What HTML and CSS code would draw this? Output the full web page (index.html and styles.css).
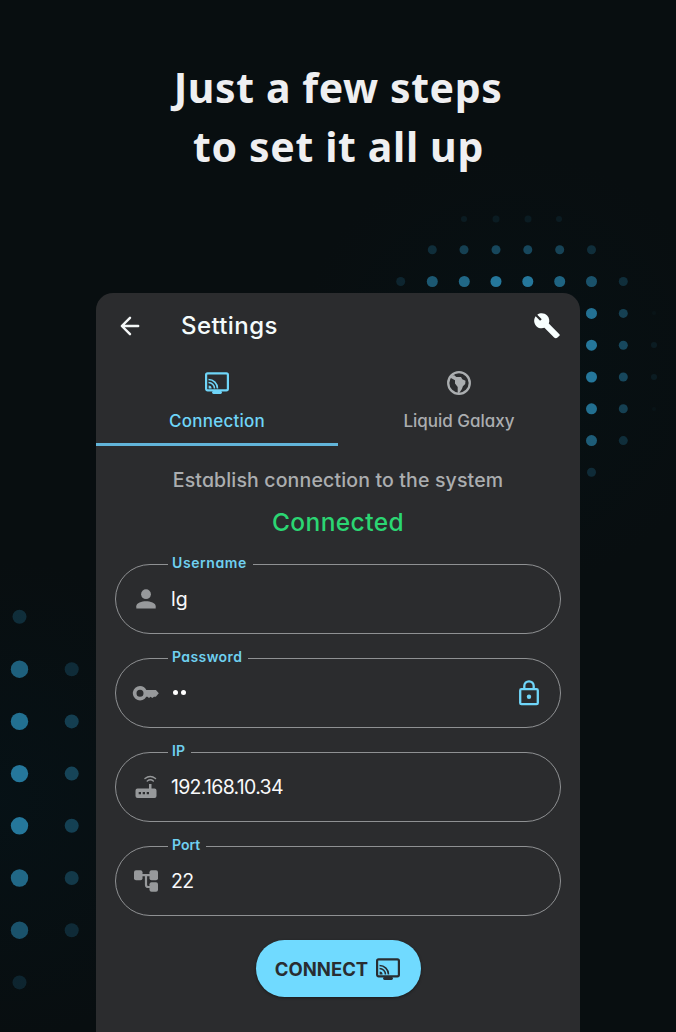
FILE: index.html
```html
<!DOCTYPE html>
<html lang="en">
<head>
<meta charset="utf-8">
<title>Settings</title>
<link rel="stylesheet" href="styles.css">
</head>
<body>
<main class="page">
  <svg class="dots" viewBox="0 0 676 1032" aria-hidden="true">
    <g fill="#25779b">
      <g opacity=".12"><circle cx="464" cy="219" r="3"/><circle cx="496" cy="219" r="3.5"/><circle cx="528" cy="219" r="3.5"/><circle cx="559" cy="219" r="3"/><circle cx="654" cy="345" r="3"/><circle cx="654" cy="377" r="3"/><circle cx="654" cy="313" r="2" opacity=".4"/><circle cx="654" cy="409" r="2" opacity=".4"/></g>
      <circle cx="432.300" cy="249.700" r="4.500" opacity=".3"/><circle cx="464" cy="249.700" r="4.500" opacity=".48"/><circle cx="496" cy="249.700" r="4.500" opacity=".55"/><circle cx="527.800" cy="249.700" r="4.500" opacity=".55"/><circle cx="559.700" cy="249.700" r="4.500" opacity=".5"/><circle cx="591.500" cy="249.700" r="4.500" opacity=".3"/>
      <circle cx="400.700" cy="281.500" r="4.500" opacity=".22"/><circle cx="432.300" cy="281.500" r="5.500" opacity=".7"/><circle cx="464.300" cy="281.500" r="5.500" opacity=".86"/><circle cx="496" cy="281.500" r="5.500"/><circle cx="527.800" cy="281.500" r="5.500"/><circle cx="559.700" cy="281.500" r="5.500" opacity=".82"/><circle cx="591.500" cy="281.500" r="5.500" opacity=".65"/><circle cx="623.300" cy="281.500" r="4.500" opacity=".3"/>
      <circle cx="591.500" cy="313.400" r="5.500" opacity=".95"/><circle cx="591.500" cy="345.200" r="5.500"/><circle cx="591.500" cy="377" r="5.500"/><circle cx="591.500" cy="408.800" r="5.500" opacity=".92"/><circle cx="591.500" cy="440.600" r="5.500" opacity=".75"/><circle cx="591.500" cy="472.300" r="4.500" opacity=".28"/>
      <circle cx="623.300" cy="313.400" r="4.500" opacity=".48"/><circle cx="623.300" cy="345.200" r="4.500" opacity=".55"/><circle cx="623.300" cy="377" r="4.500" opacity=".55"/><circle cx="623.300" cy="408.800" r="4.500" opacity=".48"/><circle cx="623.300" cy="440.600" r="4.500" opacity=".3"/>
      <circle cx="19.500" cy="616.800" r="7" opacity=".3"/><circle cx="19.500" cy="669.200" r="8.700" opacity=".78"/><circle cx="19.500" cy="721.400" r="8.700" opacity=".93"/><circle cx="19.500" cy="773.600" r="8.700"/><circle cx="19.500" cy="825.800" r="8.700"/><circle cx="19.500" cy="878" r="8.700" opacity=".86"/><circle cx="19.500" cy="930.200" r="8.700" opacity=".65"/><circle cx="19.500" cy="982.400" r="7" opacity=".22"/>
      <circle cx="71.700" cy="669.200" r="7" opacity=".28"/><circle cx="71.700" cy="721.400" r="7" opacity=".45"/><circle cx="71.700" cy="773.600" r="7" opacity=".5"/><circle cx="71.700" cy="825.800" r="7" opacity=".47"/><circle cx="71.700" cy="878" r="7" opacity=".4"/><circle cx="71.700" cy="930.200" r="7" opacity=".27"/>
    </g>
  </svg>

  <h1 class="headline"><span class="headline-a">Just a few steps</span><br><span class="headline-b">to set it all up</span></h1>

  <section class="card">
    <header class="bar">
      <svg class="icon-back" viewBox="0 0 24 24"><path d="M19 12H5.500M12 5l-7 7 7 7"/></svg>
      <h2 class="title">Settings</h2>
      <svg class="icon-tool" viewBox="0 0 24 24"><path d="M22.610 18.990l-9.080-9.080c.930-2.340.450-5.100-1.440-7C9.790.610 6.210.400 3.660 2.260L7.500 6.110 6.080 7.520 2.250 3.690C.390 6.230.600 9.820 2.900 12.110c1.860 1.860 4.570 2.350 6.890 1.480l8.300 8.300c.800.800 2.100.800 2.900 0l1.620-1.480c.500-.500.500-.900 0-1.420z"/></svg>
    </header>

    <nav class="tabs">
      <div class="tab tab-active">
        <svg class="icon-tab" viewBox="0 0 26 26"><use href="#cast"/></svg>
        <span class="label-connection">Connection</span>
      </div>
      <div class="tab">
        <svg class="icon-tab" viewBox="0 0 26 26"><circle cx="13" cy="13" r="10.800" fill="none" stroke="currentColor" stroke-width="2.300"/><path fill="currentColor" d="M5 5.500L8.300 5.300l2 1.800H15l1.300 2.200 3.200 1.500-.3 3.200-2.300 2.300-1 2.700-2.600 4h-1.600v-6L9 13.500V10.300L4 7.500z"/></svg>
        <span class="label-galaxy">Liquid Galaxy</span>
      </div>
    </nav>

    <p class="hint">Establish connection to the system</p>
    <p class="status">Connected</p>

    <form class="form">
      <fieldset class="field">
        <legend class="legend-user">Username</legend>
        <div class="row">
          <svg class="icon" viewBox="0 0 28 28"><circle cx="14" cy="9.200" r="4.900"/><path d="M4.300 23.500v-2.200c0-3.500 5.400-5 9.700-5s9.700 1.500 9.700 5v2.200z"/></svg>
          <span class="value value-user">lg</span>
        </div>
      </fieldset>
      <fieldset class="field">
        <legend class="legend-pass">Password</legend>
        <div class="row">
          <svg class="icon" viewBox="0 0 28 28"><path fill-rule="evenodd" d="M8 7a7.200 7.200 0 1 0 6.300 10.700h1.200l1.500 1.300 1.600-1.300 1.700 1.300 1.700-1.300h1.800l3-3.500-2.900-3.200H14.300A7.200 7.200 0 0 0 8 7zm0 3.700a3.500 3.500 0 1 1 0 7 3.500 3.500 0 0 1 0-7z"/></svg>
          <span class="value value-pass"><i></i><i></i></span>
          <svg class="icon-lock" viewBox="0 0 20 26"><rect x="1.200" y="9.200" width="17.600" height="15" rx="1.300"/><path d="M5.300 9V6a4.700 4.700 0 0 1 9.400 0v3"/><circle cx="10" cy="16.700" r="2.200"/></svg>
        </div>
      </fieldset>
      <fieldset class="field">
        <legend class="legend-ip">IP</legend>
        <div class="row">
          <svg class="icon" viewBox="0 0 28 28"><path fill-rule="evenodd" d="M5.500 15.500H17V11h2.500v4.500h3a2 2 0 0 1 2 2V23a2 2 0 0 1-2 2h-17a2 2 0 0 1-2-2v-5.500a2 2 0 0 1 2-2zm1.200 3.400V21.300H9v-2.400zm4 0V21.300H13v-2.400zm4 0V21.300H17v-2.400z"/><path class="stroke" d="M15.300 8q3-2.400 6 0M13 5.500q5.200-4.100 10.500 0"/></svg>
          <span class="value value-ip">192.168.10.34</span>
        </div>
      </fieldset>
      <fieldset class="field">
        <legend class="legend-port">Port</legend>
        <div class="row">
          <svg class="icon" viewBox="0 0 28 28"><rect x="2" y="3.200" width="8.500" height="10" rx="2"/><rect x="17.500" y="3.200" width="8.500" height="10" rx="2"/><rect x="17.500" y="15.200" width="8.500" height="9.500" rx="2"/><path class="stroke stroke-wide" d="M10 8.200h8M14 8.200v9.500q0 2.300 2.300 2.300H18"/></svg>
          <span class="value value-port">22</span>
        </div>
      </fieldset>
      <button class="connect" type="button">
        <span>CONNECT</span>
        <svg class="icon-tab" viewBox="0 0 26 26"><g id="cast" fill="none" stroke="currentColor"><rect x="2.100" y="3.300" width="21.800" height="17" rx="1.500" stroke-width="2.200"/><path d="M9.500 22.500h7" stroke-width="2.900" stroke-linecap="round"/><g stroke-width="1.600"><path d="M4.500 12.500a6 6 0 0 1 6 6M4.500 9.500a9 9 0 0 1 9 9"/></g><path d="M4.600 15.500a3 3 0 0 1 3 3h-3z" fill="currentColor" stroke="none"/></g></svg>
      </button>
    </form>
  </section>
</main>
</body>
</html>
```
FILE: styles.css
```css
* { box-sizing: border-box; }
body { margin: 0; font-family: Inter, "Noto Sans", sans-serif; font-feature-settings: "cv11" 1; }
h1, h2, p { margin: 0; }

.page {
  position: relative;
  width: 676px;
  height: 1032px;
  overflow: hidden;
  padding-top: 58px;
  background:
    radial-gradient(circle at 0 800px, rgba(4, 22, 30, .4), transparent 240px),
    radial-gradient(circle at 510px 370px, rgba(4, 22, 28, .3), transparent 220px),
    #080e10;
}
.dots { position: absolute; inset: 0; width: 676px; height: 1032px; }

.headline {
  position: relative;
  height: 235px;
  text-align: center;
  font: 700 41px/59px "Noto Sans", sans-serif;
  color: #efeff1;
  white-space: nowrap;
}
.headline-a { letter-spacing: .6px; }
.headline-b { letter-spacing: .65px; margin-left: 1px; }

.card {
  position: relative;
  width: 484px;
  height: 739px;
  margin-left: 96px;
  border-radius: 17px 17px 0 0;
  background: #2b2c2e;
}
.bar { display: flex; align-items: center; height: 66px; padding: 0 19px 0 20px; }
.icon-back { width: 28px; height: 28px; fill: none; stroke: #f4f7f7; stroke-width: 2.1; stroke-linecap: round; stroke-linejoin: round; }
.title { flex: 1; margin-left: 37px; padding-bottom: 2px; font-size: 24px; font-weight: 500; letter-spacing: .4px; color: #f4fbfb; }
.icon-tool { width: 28px; height: 28px; fill: #f8ffff; }

.tabs { display: flex; height: 87px; }
.tab {
  display: flex; flex-direction: column; align-items: center;
  width: 242px; padding-top: 11px;
  font-size: 17px; font-weight: 500; line-height: 24px; color: #abaeb0;
}
.tab-active { color: #6fd5f8; border-bottom: 3px solid #62b5da; }
.label-connection { letter-spacing: .25px; }
.icon-tab { width: 26px; height: 26px; margin-bottom: 13px; }

.hint { margin-top: 22px; text-align: center; font-size: 19.500px; line-height: 24px; font-weight: 500; letter-spacing: .15px; color: #abaeb0; }
.status { margin-top: 15px; text-align: center; font-size: 24.500px; line-height: 30px; font-weight: 500; letter-spacing: .4px; color: #2bd673; }

.form { display: flex; flex-direction: column; align-items: center; gap: 14px; margin-top: 17px; }
.field {
  width: 446px; height: 80px; margin: 0;
  padding: 0 21px 0 16px;
  border: 1px solid #8f9193; border-radius: 35px;
  min-width: 0;
}
.field legend {
  height: 20px; margin-left: 36px; padding: 0 6px 0 4px;
  font-size: 14px; line-height: 18px; font-weight: 600; color: #6fd0f0; white-space: nowrap;
}
.legend-user { letter-spacing: .6px; }
.legend-pass { letter-spacing: .4px; }
.row { display: flex; align-items: center; height: 50px; }
.icon { width: 28px; height: 28px; fill: #97999b; flex: none; }
.icon .stroke { fill: none; stroke: #97999b; stroke-width: 1.500; stroke-linecap: round; }
.icon .stroke-wide { stroke-width: 2.200; }
.value { flex: 1; margin-left: 11px; padding-bottom: 1px; font-size: 19.500px; line-height: 28px; color: #f8f9fa; }
.value-ip { letter-spacing: -.700px; }
.value-port { letter-spacing: -.600px; }
.value-pass { display: flex; gap: 3px; padding-left: 1.500px; }
.value-pass i { width: 5px; height: 5px; border-radius: 50%; background: #fff; }
.icon-lock { width: 20px; height: 26px; fill: none; stroke: #6fd5f8; stroke-width: 2.300; }
.icon-lock circle { fill: #6fd5f8; stroke: none; }

.connect {
  display: flex; align-items: center; justify-content: center; gap: 7px;
  width: 165px; height: 57px; margin-top: 10px; padding: 0;
  border: 0; border-radius: 28.500px;
  background: #70daff; color: #292d31;
  font: 700 18.500px/24px Inter, sans-serif;
  box-shadow: 0 1px 3px rgba(0, 0, 0, .4);
}
.connect .icon-tab { margin: 0; }
```
